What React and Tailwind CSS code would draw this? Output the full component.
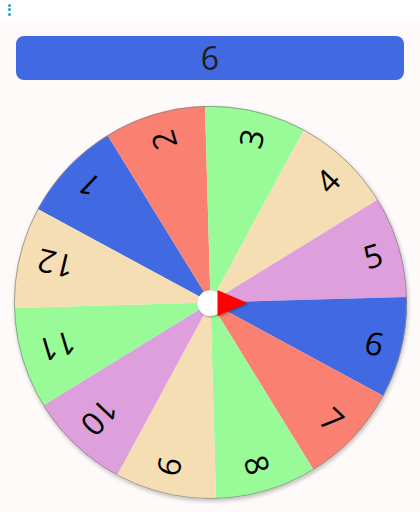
import React from "react";

const SEGMENTS = [
  { n: 1, color: "#4169e1" },
  { n: 2, color: "#fa8072" },
  { n: 3, color: "#98fb98" },
  { n: 4, color: "#f5deb3" },
  { n: 5, color: "#dda0dd" },
  { n: 6, color: "#4169e1" },
  { n: 7, color: "#fa8072" },
  { n: 8, color: "#98fb98" },
  { n: 9, color: "#f5deb3" },
  { n: 10, color: "#dda0dd" },
  { n: 11, color: "#98fb98" },
  { n: 12, color: "#f5deb3" },
];

const R = 196.5;
const OFFSET = -91.6; // start angle of segment 3, degrees

function pt(deg, r) {
  const a = (deg * Math.PI) / 180;
  return [r * Math.cos(a), r * Math.sin(a)];
}

function Wheel() {
  return (
    <svg viewBox={`${-R} ${-R} ${R * 2} ${R * 2}`} className="w-full h-full overflow-visible">
      <defs>
        <filter id="pin" x="-50%" y="-50%" width="200%" height="200%">
          <feDropShadow dx="1" dy="1" stdDeviation="1.2" floodColor="#000" floodOpacity="0.35" />
        </filter>
      </defs>
      {SEGMENTS.map((s) => {
        const start = OFFSET + (s.n - 3) * 30;
        const end = start + 30;
        const [x1, y1] = pt(start, R);
        const [x2, y2] = pt(end, R);
        const mid = start + 15;
        return (
          <g key={s.n}>
            <path d={`M0 0 L${x1} ${y1} A${R} ${R} 0 0 1 ${x2} ${y2} Z`} fill={s.color} />
            <text
              transform={`rotate(${mid})`}
              x={178}
              y={1}
              textAnchor="end"
              dominantBaseline="central"
              fontSize="32"
              fill="#000"
              style={{ fontFamily: '"Open Sans", "Noto Sans", sans-serif' }}
            >
              {s.n}
            </text>
          </g>
        );
      })}
      <circle cx="0" cy="0" r={R - 0.4} fill="none" stroke="#8a8a8a" strokeWidth="0.8" />
      <g filter="url(#pin)">
        <circle cx="-0.3" cy="0.6" r="12.8" fill="#fff" />
        <polygon points="7,-12.2 7,13.4 37,0.6" fill="#ff0000" />
      </g>
    </svg>
  );
}

export default function App() {
  return (
    <div className="min-h-[512px] bg-[#fffafa]" style={{ fontFamily: '"Open Sans", "Noto Sans", sans-serif' }}>
      <div className="h-5 bg-white flex flex-col gap-[1.6px] pl-[7.5px] pt-[3.5px]">
        <div className="w-[3px] h-[3px] rounded-full bg-[#1ba3c6]" />
        <div className="w-[3px] h-[3px] rounded-full bg-[#1ba3c6]" />
        <div className="w-[3px] h-[3px] rounded-full bg-[#1ba3c6]" />
      </div>

      <div className="px-4 pt-4">
        <div className="h-11 rounded-lg bg-[#4169e1] flex items-center justify-center text-[32px] leading-none text-[#1e1e1e]">
          6
        </div>
      </div>

      <div className="mt-[26px] flex justify-center">
        <div className="w-[393px] h-[393px] rounded-full shadow-[1px_2px_4px_rgba(0,0,0,0.25)]">
          <Wheel />
        </div>
      </div>
    </div>
  );
}
